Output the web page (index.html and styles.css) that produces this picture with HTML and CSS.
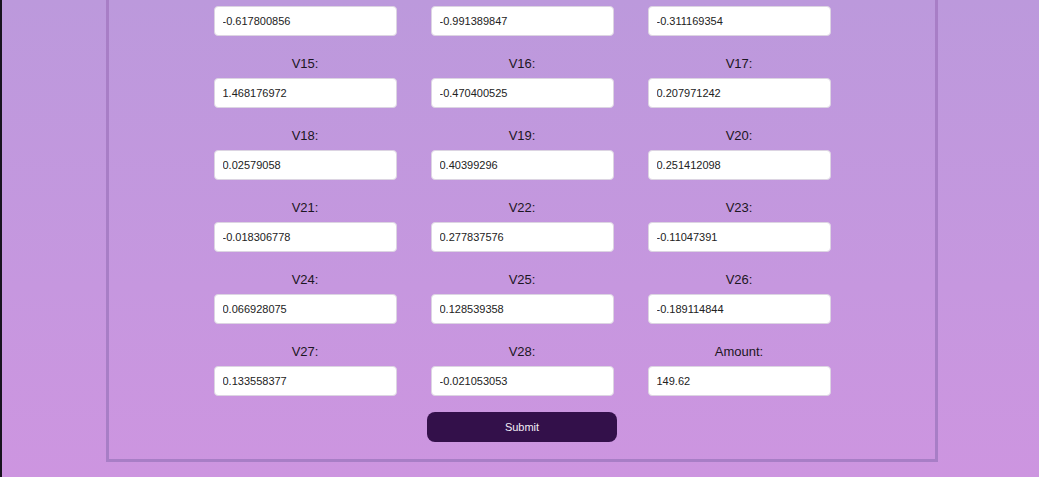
FILE: index.html
```html
<!DOCTYPE html>
<html lang="en">
<head>
<meta charset="utf-8">
<title>Transaction Form</title>
<link rel="stylesheet" href="styles.css">
</head>
<body>
<div class="frame">
  <form class="form-card">
    <div class="grid">
      <div class="field partial"><input class="input" type="text" value="-0.617800856"></div>
      <div class="field partial"><input class="input" type="text" value="-0.991389847"></div>
      <div class="field partial"><input class="input" type="text" value="-0.311169354"></div>

      <div class="field"><label class="label">V15:</label><input class="input" type="text" value="1.468176972"></div>
      <div class="field"><label class="label">V16:</label><input class="input" type="text" value="-0.470400525"></div>
      <div class="field"><label class="label">V17:</label><input class="input" type="text" value="0.207971242"></div>

      <div class="field"><label class="label">V18:</label><input class="input" type="text" value="0.02579058"></div>
      <div class="field"><label class="label">V19:</label><input class="input" type="text" value="0.40399296"></div>
      <div class="field"><label class="label">V20:</label><input class="input" type="text" value="0.251412098"></div>

      <div class="field"><label class="label">V21:</label><input class="input" type="text" value="-0.018306778"></div>
      <div class="field"><label class="label">V22:</label><input class="input" type="text" value="0.277837576"></div>
      <div class="field"><label class="label">V23:</label><input class="input" type="text" value="-0.11047391"></div>

      <div class="field"><label class="label">V24:</label><input class="input" type="text" value="0.066928075"></div>
      <div class="field"><label class="label">V25:</label><input class="input" type="text" value="0.128539358"></div>
      <div class="field"><label class="label">V26:</label><input class="input" type="text" value="-0.189114844"></div>

      <div class="field"><label class="label">V27:</label><input class="input" type="text" value="0.133558377"></div>
      <div class="field"><label class="label">V28:</label><input class="input" type="text" value="-0.021053053"></div>
      <div class="field"><label class="label">Amount:</label><input class="input" type="text" value="149.62"></div>
    </div>
    <div class="actions">
      <button class="submit" type="button">Submit</button>
    </div>
  </form>
</div>
</body>
</html>
```

FILE: styles.css
```css
html, body {
  margin: 0;
  padding: 0;
}

body {
  min-height: 477px;
  background: linear-gradient(to bottom, #bc99dc 0%, #c697df 60%, #cd95e0 100%);
  border-left: 2px solid #17131e;
  box-sizing: border-box;
  font-family: "Liberation Sans", Arial, sans-serif;
  overflow: hidden;
}

.frame {
  display: flex;
  padding-left: 104px;
}

.form-card {
  width: 832px;
  box-sizing: border-box;
  border: 3px solid #a87ec6;
  border-top: 0;
  padding: 6px 0 17px;
  display: flex;
  flex-direction: column;
  align-items: center;
}

.grid {
  display: grid;
  grid-template-columns: repeat(3, 183px);
  column-gap: 34px;
  row-gap: 20px;
}

.field {
  display: flex;
  flex-direction: column;
  align-items: center;
  gap: 6px;
}

.label {
  font-size: 13px;
  line-height: 16px;
  color: #1c1622;
}

.input {
  width: 100%;
  height: 30px;
  box-sizing: border-box;
  border: 1px solid #dcd4e2;
  border-radius: 4px;
  background: #ffffff;
  padding: 0 8px;
  font-family: "Liberation Sans", Arial, sans-serif;
  font-size: 11px;
  color: #222222;
  outline: none;
}

.actions {
  display: flex;
  justify-content: center;
  margin-top: 16px;
}

.submit {
  width: 190px;
  height: 30px;
  border: 0;
  border-radius: 8px;
  background: #33104a;
  color: #f2eef6;
  font-family: "Liberation Sans", Arial, sans-serif;
  font-size: 11px;
  cursor: pointer;
}
```
